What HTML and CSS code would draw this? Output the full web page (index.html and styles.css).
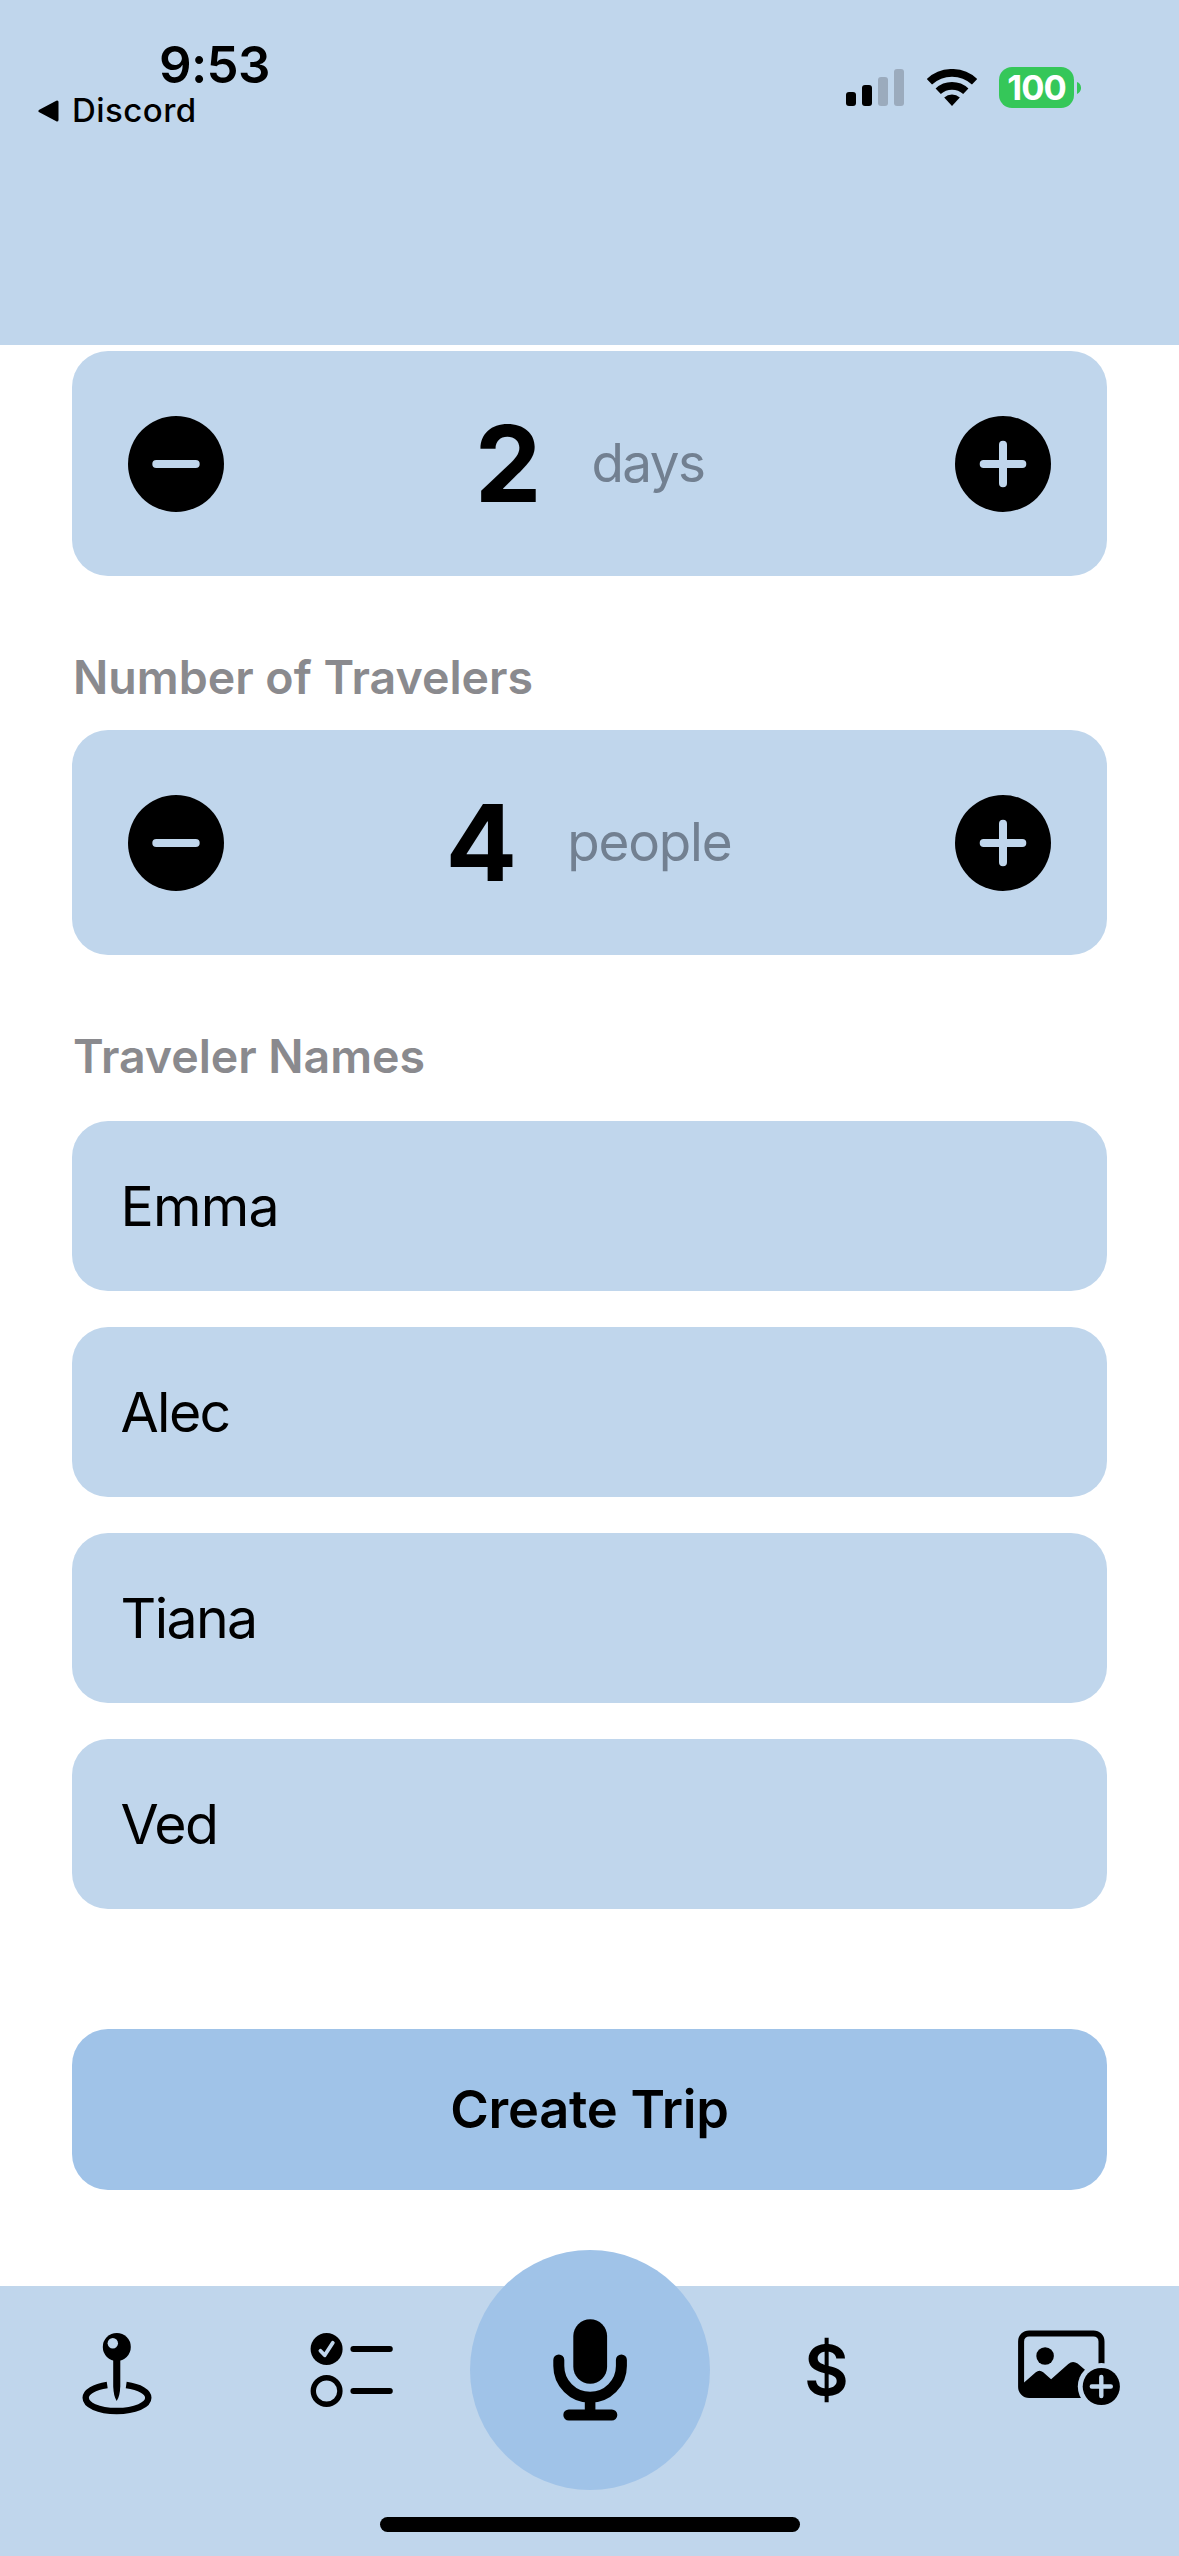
FILE: index.html
```html
<!DOCTYPE html>
<html lang="en">
<head>
<meta charset="utf-8">
<meta name="viewport" content="width=device-width">
<title>Create Trip</title>
<link rel="stylesheet" href="styles.css">
</head>
<body>
<div class="screen">
  <header class="header">
    <div class="status-left">
      <div class="clock">9:53</div>
      <div class="back">
        <svg width="21" height="22" viewBox="0 0 21 22"><path d="M2 11 L19 2 V20 Z" stroke="#000" stroke-width="3" stroke-linejoin="round"/></svg>
        <span>Discord</span>
      </div>
    </div>
    <div class="status-right">
      <svg width="58" height="37" viewBox="846 69 58 37">
        <rect x="846" y="92" width="10" height="14" rx="3"/>
        <rect x="862" y="85" width="10" height="21" rx="3"/>
        <rect class="dim" x="878" y="77" width="10" height="29" rx="3"/>
        <rect class="dim" x="894" y="69" width="10" height="37" rx="3"/>
      </svg>
      <svg class="wifi" width="52" height="37" viewBox="925.5 69 52 37">
        <path d="M928.9 81.7 A33.2 33.2 0 0 1 974.1 81.7 M937.7 91.2 A20.3 20.3 0 0 1 965.3 91.2" fill="none" stroke="#000" stroke-width="7.7"/>
        <path d="M951.5 106 L943.7 97.6 A11.5 11.5 0 0 1 959.3 97.6 Z"/>
      </svg>
      <div class="battery">100</div>
      <svg class="nub" width="4" height="12" viewBox="0 0 4 12"><path d="M0 0 C5.4 2 5.4 10 0 12 Z"/></svg>
    </div>
  </header>

  <main class="form">
    <section class="stepper">
      <svg class="round" viewBox="0 0 96 96"><circle cx="48" cy="48" r="48"/><path d="M28.3 48 H67.7"/></svg>
      <div class="reading"><b class="value">2</b><span class="unit">days</span></div>
      <svg class="round" viewBox="0 0 96 96"><circle cx="48" cy="48" r="48"/><path d="M28.7 48 H67.3 M48 28.7 V67.3"/></svg>
    </section>

    <h2 class="label">Number of Travelers</h2>
    <section class="stepper">
      <svg class="round" viewBox="0 0 96 96"><circle cx="48" cy="48" r="48"/><path d="M28.3 48 H67.7"/></svg>
      <div class="reading"><b class="value">4</b><span class="unit people">people</span></div>
      <svg class="round" viewBox="0 0 96 96"><circle cx="48" cy="48" r="48"/><path d="M28.7 48 H67.3 M48 28.7 V67.3"/></svg>
    </section>

    <h2 class="label names-label">Traveler Names</h2>
    <section class="names">
      <div class="field wide">Emma</div>
      <div class="field">Alec</div>
      <div class="field">Tiana</div>
      <div class="field">Ved</div>
    </section>

    <div class="create">Create Trip</div>
  </main>

  <nav class="tabs">
    <div class="tab">
      <svg width="140" height="100" viewBox="47 2320 140 100">
        <path d="M107.2 2385 C94 2387 85.7 2392 85.7 2397.8 C85.7 2405 98 2411 116.7 2411 S148.3 2405 148.3 2397.8 C148.3 2392 140 2387 126.2 2385" fill="none" stroke="#000" stroke-width="6.4"/>
        <path d="M113.2 2358 H120.3 V2386 Q120 2396 116.7 2401 Q113.5 2396 113.2 2386 Z"/>
        <circle cx="116.8" cy="2347" r="14"/>
        <circle class="hole" cx="112.8" cy="2343.3" r="5.2"/>
      </svg>
    </div>
    <div class="tab">
      <svg width="140" height="100" viewBox="282.4 2320 140 100">
        <circle cx="327" cy="2349" r="16"/>
        <path class="knock check" d="M320.8 2350.8 L325.1 2355.3 L333.2 2342.8"/>
        <circle cx="327" cy="2391" r="13.3" fill="none" stroke="#000" stroke-width="5.4"/>
        <path d="M353.8 2349 H390.2 M353.8 2391 H390.2" stroke="#000" stroke-width="6" stroke-linecap="round"/>
      </svg>
    </div>
    <div class="tab">
      <div class="mic">
        <svg width="74" height="102" viewBox="552.5 2319.5 74 102">
          <rect x="572.8" y="2319.7" width="33.8" height="64.5" rx="16.9"/>
          <path d="M558.3 2360.4 V2366.4 A31.3 31.3 0 0 0 620.9 2366.4 V2360.4" fill="none" stroke="#000" stroke-width="11" stroke-linecap="round"/>
          <rect x="584.3" y="2400" width="10.6" height="13"/>
          <rect x="562.8" y="2410" width="54" height="11" rx="5.5"/>
        </svg>
      </div>
    </div>
    <div class="tab"><span class="dollar">$</span></div>
    <div class="tab">
      <svg width="140" height="100" viewBox="992.2 2320 140 100">
        <rect x="1021.3" y="2333.4" width="80.4" height="61.6" rx="8" fill="none" stroke="#000" stroke-width="6"/>
        <path d="M1022 2384.5 L1036 2372.3 Q1039.6 2369.3 1043.4 2372.3 L1051.3 2379.3 L1068.5 2364 Q1073 2360 1077.8 2363.6 L1086 2370.5 V2396 H1026 Q1022 2396 1022 2390 Z"/>
        <circle cx="1045.3" cy="2356" r="8.8"/>
        <circle class="hole" cx="1101.5" cy="2386.5" r="23.5"/>
        <circle cx="1101.5" cy="2386.5" r="18.6"/>
        <path class="knock" d="M1092 2386.5 H1111 M1101.5 2377 V2396"/>
      </svg>
    </div>
    <div class="home-bar"></div>
  </nav>
</div>
</body>
</html>
```
FILE: styles.css
```css
* { box-sizing: border-box; }

body {
  margin: 0;
  background: #fff;
  color: #000;
  font-family: Inter, "Liberation Sans", sans-serif;
}

svg { display: block; flex: none; }

.screen {
  width: 1179px;
  height: 2556px;
  display: flex;
  flex-direction: column;
  overflow: hidden;
}

.header {
  height: 345px;
  flex: none;
  display: flex;
  justify-content: space-between;
  align-items: flex-start;
  padding: 40px 98px 0 38px;
  background: #c0d6ec;
}

.clock {
  padding-left: 121px;
  font-size: 51px;
  font-weight: 600;
  line-height: 50px;
  letter-spacing: -0.65px;
}

.back {
  display: flex;
  align-items: center;
  gap: 13px;
  height: 41px;
  font-size: 33px;
  font-weight: 500;
  line-height: 41px;
  letter-spacing: 0.45px;
}

.status-right {
  display: flex;
  align-items: center;
  height: 41px;
  margin-top: 27px;
}

.dim { fill: #9babbd; }
.wifi { margin-left: 21.5px; }

.battery {
  width: 75px;
  height: 41px;
  margin-left: 21.5px;
  border-radius: 13px;
  background: #35c759;
  color: #fff;
  font-size: 34.5px;
  font-weight: 700;
  line-height: 41px;
  letter-spacing: -1px;
  text-align: center;
}

.nub { margin-left: 3px; fill: #35c759; }

.form {
  flex: 1;
  padding: 6px 72px 0;
}

.stepper {
  display: flex;
  align-items: center;
  justify-content: space-between;
  height: 225px;
  padding: 0 56px;
  border-radius: 36px;
  background: #c0d6ec;
}

.round {
  width: 96px;
  height: 96px;
}

.round path {
  fill: none;
  stroke: #c0d6ec;
  stroke-width: 8;
  stroke-linecap: round;
}

.reading {
  display: flex;
  align-items: center;
  gap: 50px;
}

.value {
  font-size: 106px;
  font-weight: 700;
  line-height: 120px;
}

.unit {
  padding-bottom: 2px;
  color: #728091;
  font-size: 53px;
  line-height: 64px;
  letter-spacing: -1.6px;
}

.unit.people {
  padding-right: 2px;
  letter-spacing: -1.2px;
}

.label {
  margin: 72px 0 24px;
  padding-left: 1px;
  color: #8a8a8e;
  font-size: 46.5px;
  font-weight: 600;
  line-height: 58px;
}

.names-label {
  margin-bottom: 36px;
  letter-spacing: -0.05px;
}

.names {
  display: flex;
  flex-direction: column;
  gap: 36px;
}

.field {
  height: 170px;
  padding-left: 48.5px;
  border-radius: 36px;
  background: #c0d6ec;
  font-size: 55.4px;
  line-height: 170px;
  letter-spacing: -1.6px;
}

.field.wide { letter-spacing: -0.8px; }

.create {
  height: 161px;
  margin-top: 120px;
  border-radius: 36px;
  background: #a0c3e8;
  font-size: 52.4px;
  font-weight: 600;
  line-height: 161px;
  letter-spacing: -0.25px;
  text-align: center;
}

.tabs {
  position: relative;
  flex: none;
  height: 270px;
  display: grid;
  grid-template-columns: repeat(5, 1fr);
  background: #c0d6ec;
}

.tab {
  display: flex;
  justify-content: center;
  align-items: center;
  height: 168px;
}

.mic {
  display: flex;
  flex: none;
  justify-content: center;
  align-items: center;
  width: 240px;
  height: 240px;
  border-radius: 50%;
  background: #a0c3e8;
}

.dollar {
  padding-right: 1px;
  font-size: 69px;
  font-weight: 600;
  line-height: 168px;
}

.hole { fill: #c0d6ec; }

.knock {
  fill: none;
  stroke: #c0d6ec;
  stroke-width: 4.4;
  stroke-linecap: round;
  stroke-linejoin: round;
}

.knock.check { stroke-width: 3.8; }

.home-bar {
  position: absolute;
  left: 380px;
  bottom: 24px;
  width: 420px;
  height: 15px;
  border-radius: 8px;
  background: #000;
}
```
